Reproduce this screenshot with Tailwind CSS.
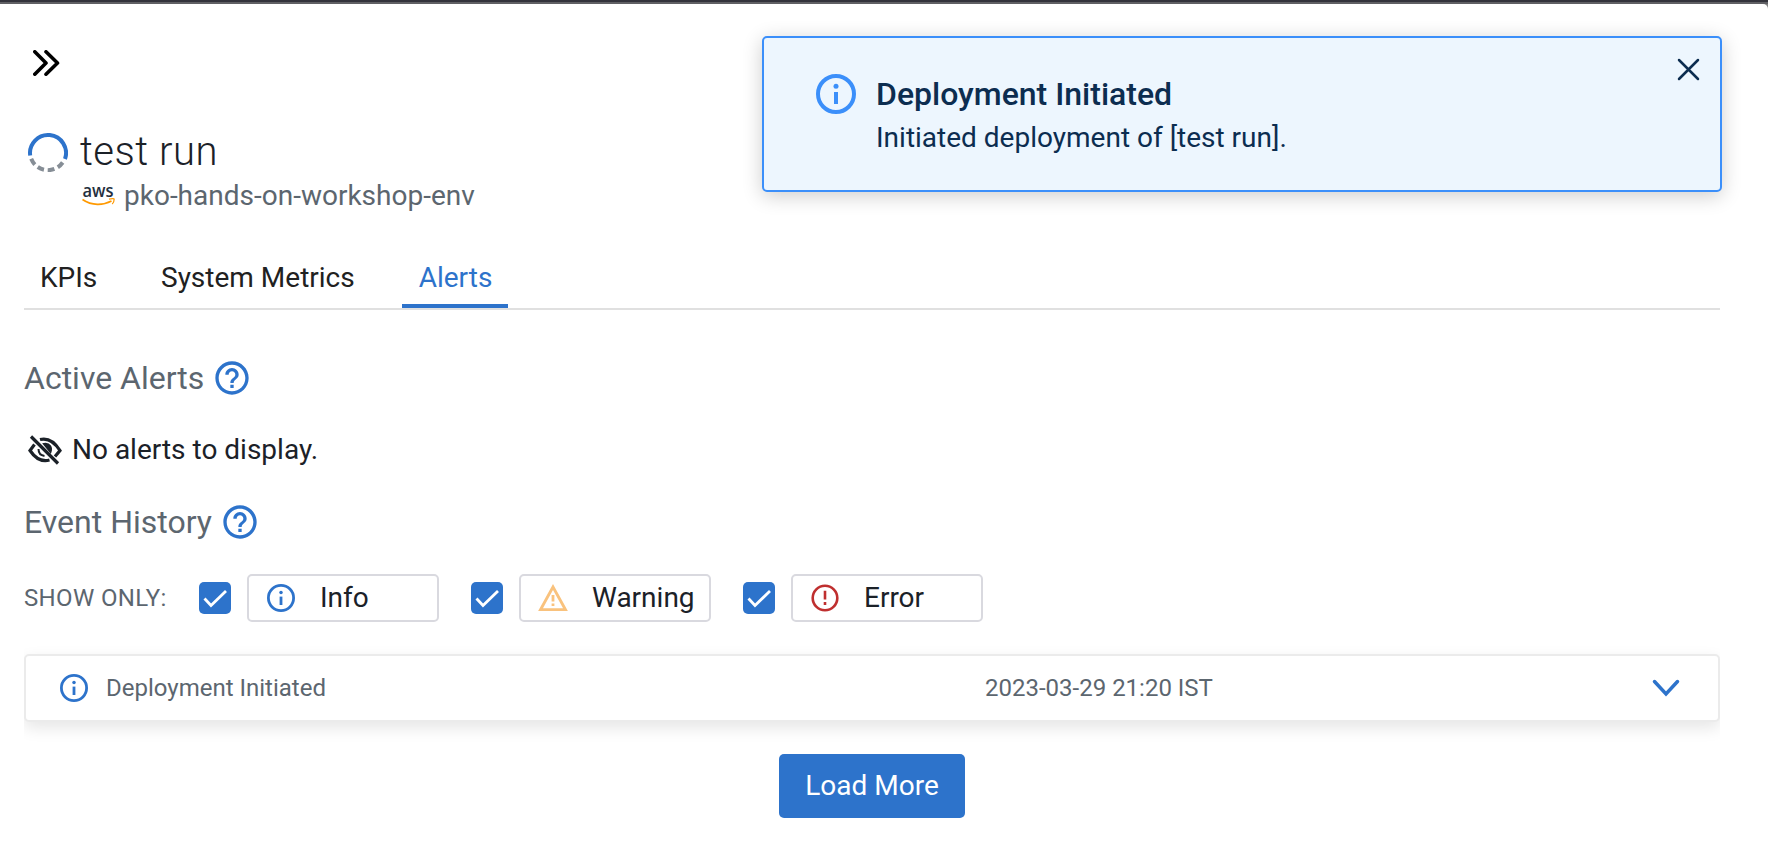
<!DOCTYPE html>
<html lang="en">
<head>
<meta charset="utf-8">
<title>test run - Alerts</title>
<script src="https://cdn.jsdelivr.net/npm/@tailwindcss/browser@4"></script>
</head>
<body class="h-[844px] overflow-hidden bg-[#808080] font-[Roboto,sans-serif] text-[28px] text-[#1b2128]">
<svg class="hidden">
  <symbol id="info" viewBox="0 0 40 40"><circle cx="20" cy="20" r="18" fill="none" stroke="currentColor" stroke-width="4"/><circle cx="20" cy="12.2" r="2.500" fill="currentColor"/><path d="M20 18v12" stroke="currentColor" stroke-width="4"/></symbol>
  <symbol id="help" viewBox="0 0 24 24"><path fill="currentColor" d="M11 18h2v-2h-2v2zm1-16C6.480 2 2 6.480 2 12s4.480 10 10 10 10-4.480 10-10S17.520 2 12 2zm0 18c-4.410 0-8-3.590-8-8s3.590-8 8-8 8 3.590 8 8-3.590 8-8 8zm0-14c-2.210 0-4 1.790-4 4h2c0-1.100.9-2 2-2s2 .9 2 2c0 2-3 1.750-3 5h2c0-2.250 3-2.500 3-5 0-2.210-1.790-4-4-4z"/></symbol>
  <symbol id="check" viewBox="0 0 32 32"><path d="M5.500 16.500l6.500 7L27 9" fill="none" stroke="white" stroke-width="2.800"/></symbol>
</svg>
<div class="h-0.5 bg-[#33333b]"></div>
<div class="h-0.5 bg-[#606064]"></div>
<main class="h-[840px] rounded-tr-[5px] bg-white pl-6">
  <div class="flex h-[118px] items-center pl-[9px]">
    <svg class="h-[26px] w-[27px]" viewBox="0 0 27 26" fill="none" stroke="black" stroke-width="3.600" stroke-linecap="round" stroke-linejoin="round"><path d="M1.800 1.800L13 13 1.800 24.200M13 1.800L24.500 13 13 24.200"/></svg>
  </div>
  <div class="flex h-[58px] items-center gap-3 pl-1">
    <svg class="mt-0.5 size-10" viewBox="0 0 40 40" fill="none" stroke-width="4"><path d="M2.200 23.500A18 18 0 1 1 37 27" stroke="#2d73cb"/><path d="M3.200 26.800A18 18 0 0 0 35 30" stroke="#868e96" stroke-dasharray="6.800 3.800"/></svg>
    <h1 class="mt-0.5 text-[40px]/[58px] font-light tracking-[0.5px] whitespace-nowrap">test run</h1>
  </div>
  <div class="flex h-[29px] items-center gap-[9px] pl-[58px] text-[#5c666f]">
    <svg class="h-6 w-[33px] overflow-visible" viewBox="0 -2 33 24"><text x="0.500" y="11.500" font-family="Open Sans" font-weight="600" font-size="18" textLength="31" lengthAdjust="spacingAndGlyphs" fill="#252f3e">aws</text><path d="M.5 14.500C10 21 21 20.500 29.500 16" fill="none" stroke="#f90" stroke-width="1.600"/><path d="M27 14.200c3-.8 5.200-.5 5.200-.2 0 1.500-.5 3.500-2 5" fill="none" stroke="#f90" stroke-width="1.200"/></svg>
    <span class="mt-0.5 whitespace-nowrap">pko-hands-on-workshop-env</span>
  </div>
  <div class="w-[1696px]">
    <nav class="mt-[37px] flex h-16 border-b-2 border-[#e0e0e0] text-[#212121]">
      <div class="w-[121px] pl-4 leading-[64px]">KPIs</div>
      <div class="w-[257px] pl-4 leading-[64px]">System Metrics</div>
      <div class="h-[62px] w-[106px] border-b-4 border-[#2d73cb] pl-px text-center leading-[64px] text-[#2d73cb]">Alerts</div>
    </nav>
    <h2 class="mt-[46px] flex h-11 items-center gap-2 text-[32px] text-[#5c666f]">Active Alerts<svg class="size-10 text-[#2d73cb]"><use href="#help"/></svg></h2>
    <div class="mt-[27px] flex h-11 items-center gap-2.5 pl-1">
      <svg class="mt-0.5 size-[34px]" viewBox="0 0 34 34" fill="none" stroke="#1b2128" stroke-width="3.200"><path d="M3 3.500l27 27"/><path d="M6.500 11.500L2 17.500c5 7.500 12 11.500 19.500 9.500M12 6.500c8-2 15 3 20 11l-5 6"/><path d="M10.500 16c0 4 2.500 6.500 6 7" stroke-width="2"/><path d="M16 11c6-1 8 4 6.500 8z" fill="#1b2128" stroke-width="2"/></svg>
      <span class="mt-0.5">No alerts to display.</span>
    </div>
    <h2 class="mt-[29px] flex h-11 items-center gap-2 text-[32px] text-[#5c666f]">Event History<svg class="size-10 text-[#2d73cb]"><use href="#help"/></svg></h2>
    <div class="mt-[30px] flex h-12 items-center">
      <span class="w-[175px] text-2xl tracking-[0.35px] whitespace-nowrap text-[#5c666f]">SHOW ONLY:</span>
      <div class="flex items-center gap-8">
        <div class="flex items-center gap-4"><span class="size-8 rounded-[5px] bg-[#2d73cb]"><svg class="size-8"><use href="#check"/></svg></span>
          <div class="flex h-12 w-48 items-center gap-[25px] rounded-[5px] border-2 border-[#d9d9df] pl-[18px]"><svg class="size-7 text-[#2d73cb]"><use href="#info"/></svg>Info</div></div>
        <div class="flex items-center gap-4"><span class="size-8 rounded-[5px] bg-[#2d73cb]"><svg class="size-8"><use href="#check"/></svg></span>
          <div class="flex h-12 w-48 items-center gap-[25px] rounded-[5px] border-2 border-[#d9d9df] pl-[18px]"><svg class="size-7 overflow-visible" viewBox="0 0 28 28" fill="none" stroke="#f9c27d" stroke-width="2.800"><path d="M14 3L1.500 25.700h25z"/><path d="M14 11v6.500M14 19.500v2.500"/></svg>Warning</div></div>
        <div class="flex items-center gap-4"><span class="size-8 rounded-[5px] bg-[#2d73cb]"><svg class="size-8"><use href="#check"/></svg></span>
          <div class="flex h-12 w-48 items-center gap-[25px] rounded-[5px] border-2 border-[#d9d9df] pl-[18px]"><svg class="size-7" viewBox="0 0 28 28" fill="none" stroke="#bf2f2f" stroke-width="2.600"><circle cx="14" cy="14" r="12.300"/><path d="M14 6.800v8.700M14 18v3"/></svg>Error</div></div>
      </div>
    </div>
    <div class="mt-8 overflow-x-clip">
      <div class="flex h-[68px] items-center rounded-[5px] border-2 border-[#ebebeb] bg-white text-2xl text-[#5c666f] shadow-[0_6px_16px_rgba(0,0,0,0.1)]">
        <svg class="ml-[34px] size-7 text-[#2d73cb]"><use href="#info"/></svg>
        <span class="ml-[18px] w-[879px]">Deployment Initiated</span>
        <span>2023-03-29 21:20 IST</span>
        <svg class="mr-[38px] ml-auto h-[18px] w-7" viewBox="0 0 28 18" fill="none" stroke="#2d73cb" stroke-width="3.500" stroke-linecap="round"><path d="M2.500 2.500L14 15 25.500 2.500"/></svg>
      </div>
    </div>
    <button class="mx-auto mt-8 block h-16 w-[186px] rounded-[5px] bg-[#2d73cb] text-white">Load More</button>
  </div>
</main>
<div class="absolute top-9 left-[762px] flex h-[156px] w-[960px] rounded-[5px] border-2 border-[#3b8ffa] bg-[#edf6fe] pt-9 pl-[52px] text-[#0c2d50] shadow-[0_4px_20px_rgba(0,0,0,0.2)]">
  <svg class="size-10 text-[#3b8ffa]"><use href="#info"/></svg>
  <div class="ml-5 whitespace-nowrap"><div class="text-[32px]/[40px] font-medium">Deployment Initiated</div><div class="mt-[2px] leading-[43px]">Initiated deployment of [test run].</div></div>
  <svg class="absolute top-[20px] right-[20.500px] size-[23px]" viewBox="0 0 23 23" stroke="#0c2d50" stroke-width="2.500" stroke-linecap="round"><path d="M2 2l19 19M21 2L2 21"/></svg>
</div>
</body>
</html>
